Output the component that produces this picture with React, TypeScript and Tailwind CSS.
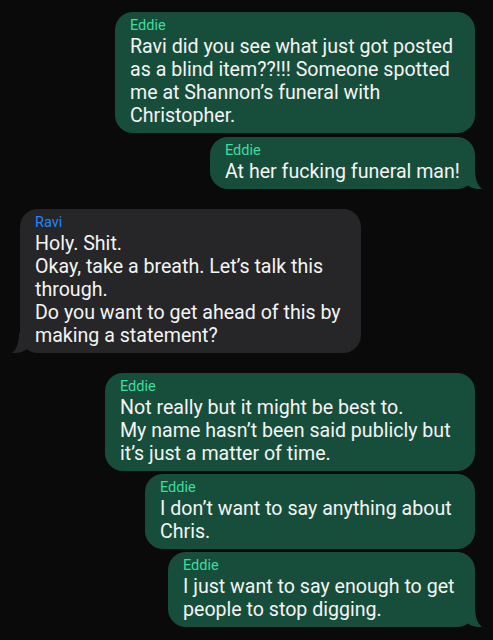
interface Message {
  from: "Eddie" | "Ravi"
  lines: string[]
  width: string
  gap: string
  tail?: boolean
}

const messages: Message[] = [
  {
    from: "Eddie",
    lines: ["Ravi did you see what just got posted", "as a blind item??!!! Someone spotted", "me at Shannon\u2019s funeral with", "Christopher."],
    width: "w-[360px]",
    gap: "mt-0",
  },
  { from: "Eddie", lines: ["At her fucking funeral man!"], width: "w-[265px]", gap: "mt-[4px]", tail: true },
  {
    from: "Ravi",
    lines: ["Holy. Shit.", "Okay, take a breath. Let\u2019s talk this", "through.", "Do you want to get ahead of this by", "making a statement?"],
    width: "w-[341px]",
    gap: "mt-[20px]",
    tail: true,
  },
  {
    from: "Eddie",
    lines: ["Not really but it might be best to.", "My name hasn\u2019t been said publicly but", "it\u2019s just a matter of time."],
    width: "w-[370px]",
    gap: "mt-[20px]",
  },
  { from: "Eddie", lines: ["I don\u2019t want to say anything about", "Chris."], width: "w-[330px]", gap: "mt-[3px]" },
  {
    from: "Eddie",
    lines: ["I just want to say enough to get", "people to stop digging."],
    width: "w-[307px]",
    gap: "mt-[3px]",
    tail: true,
  },
]

function Tail({ mine }: { mine: boolean }) {
  if (mine) {
    return (
      <svg className="absolute right-[-7px] bottom-0" width="20" height="20" viewBox="0 0 20 20">
        <path d="M2 0 L13 0 C13 9 15 16 20 20 C14 20.5 9 19 5 16 L2 18 Z" fill="#174e3b" />
      </svg>
    )
  }
  return (
    <svg className="absolute left-[-8px] bottom-0" width="20" height="20" viewBox="0 0 20 20">
      <path d="M18 0 L7 0 C7 9 5 16 0 20 C6 20.5 11 19 15 16 L18 18 Z" fill="#262628" />
    </svg>
  )
}

function Bubble({ msg }: { msg: Message }) {
  const mine = msg.from === "Eddie"
  return (
    <div
      className={`relative ${msg.width} ${msg.gap} ${
        mine ? "self-end mr-[18px] bg-[#174e3b]" : "self-start ml-[20px] bg-[#262628]"
      } rounded-[18px] pl-[15px] pr-[12px] pt-[5px] pb-[6px]`}
    >
      <div className={`text-[14.5px] leading-[18px] ${mine ? "text-[#3fdc9f]" : "text-[#1f86ff]"}`}>{msg.from}</div>
      <div className="text-[19.6px] leading-[23px] text-[#f4f4f4] whitespace-nowrap">
        {msg.lines.map((line, i) => (
          <div key={i}>{line}</div>
        ))}
      </div>
      {msg.tail && <Tail mine={mine} />}
    </div>
  )
}

export default function App() {
  return (
    <div className="w-[493px] h-[640px] bg-[#0a0a0a] flex flex-col pt-[12px] overflow-hidden font-['Roboto',sans-serif]">
      {messages.map((m, i) => (
        <Bubble key={i} msg={m} />
      ))}
    </div>
  )
}
